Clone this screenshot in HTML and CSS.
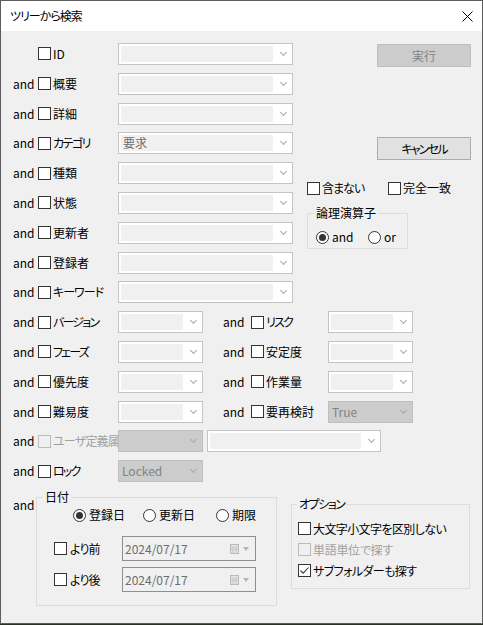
FILE: index.html
```html
<!DOCTYPE html>
<html lang="ja">
<head>
<meta charset="utf-8">
<title>ツリーから検索</title>
<link rel="stylesheet" href="styles.css">
</head>
<body>
<div class="window">
  <div class="titlebar">
    <span class="title ls15">ツリーから検索</span>
    <svg class="close" width="11" height="11" viewBox="0 0 11 11"><path d="M0.5 0.5 L10.5 10.5 M10.5 0.5 L0.5 10.5" stroke="#000" stroke-width="1" fill="none"/></svg>
  </div>
  <div class="content">
    <div class="top">
      <div class="rows">
        <div class="row"><span class="and"></span><span class="cb"></span><span class="lbl">ID</span><div class="combo"><span class="field"></span><span class="arrow"></span></div></div>
        <div class="row"><span class="and">and</span><span class="cb"></span><span class="lbl">概要</span><div class="combo"><span class="field"></span><span class="arrow"></span></div></div>
        <div class="row"><span class="and">and</span><span class="cb"></span><span class="lbl">詳細</span><div class="combo"><span class="field"></span><span class="arrow"></span></div></div>
        <div class="row"><span class="and">and</span><span class="cb"></span><span class="lbl ls25">カテゴリ</span><div class="combo"><span class="field">要求</span><span class="arrow"></span></div></div>
        <div class="row"><span class="and">and</span><span class="cb"></span><span class="lbl">種類</span><div class="combo"><span class="field"></span><span class="arrow"></span></div></div>
        <div class="row"><span class="and">and</span><span class="cb"></span><span class="lbl">状態</span><div class="combo"><span class="field"></span><span class="arrow"></span></div></div>
        <div class="row"><span class="and">and</span><span class="cb"></span><span class="lbl">更新者</span><div class="combo"><span class="field"></span><span class="arrow"></span></div></div>
        <div class="row"><span class="and">and</span><span class="cb"></span><span class="lbl">登録者</span><div class="combo"><span class="field"></span><span class="arrow"></span></div></div>
        <div class="row"><span class="and">and</span><span class="cb"></span><span class="lbl ls15">キーワード</span><div class="combo"><span class="field"></span><span class="arrow"></span></div></div>
      </div>
      <div class="side">
        <div class="btn btn-off">実行</div>
        <div class="btn btn-cancel"><span class="ls35">キャンセル</span></div>
        <div class="flags">
          <span class="flag flag-first"><span class="cb"></span><span class="flbl ls15">含まない</span></span>
          <span class="flag"><span class="cb"></span><span class="flbl">完全一致</span></span>
        </div>
        <fieldset class="group logic">
          <legend>論理演算子</legend>
          <div class="radios">
            <span class="ritem ritem-and"><span class="radio on"></span><span class="rlbl">and</span></span>
            <span class="ritem"><span class="radio"></span><span class="rlbl">or</span></span>
          </div>
        </fieldset>
      </div>
    </div>

    <div class="mid">
      <div class="mrow">
        <span class="and">and</span><span class="cb"></span><span class="lbl ls3">バージョン</span><div class="combo"><span class="field"></span><span class="arrow"></span></div>
        <span></span><span class="and">and</span><span class="cb"></span><span class="lbl ls3">リスク</span><div class="combo"><span class="field"></span><span class="arrow"></span></div>
      </div>
      <div class="mrow">
        <span class="and">and</span><span class="cb"></span><span class="lbl ls3">フェーズ</span><div class="combo"><span class="field"></span><span class="arrow"></span></div>
        <span></span><span class="and">and</span><span class="cb"></span><span class="lbl">安定度</span><div class="combo"><span class="field"></span><span class="arrow"></span></div>
      </div>
      <div class="mrow">
        <span class="and">and</span><span class="cb"></span><span class="lbl">優先度</span><div class="combo"><span class="field"></span><span class="arrow"></span></div>
        <span></span><span class="and">and</span><span class="cb"></span><span class="lbl">作業量</span><div class="combo"><span class="field"></span><span class="arrow"></span></div>
      </div>
      <div class="mrow">
        <span class="and">and</span><span class="cb"></span><span class="lbl">難易度</span><div class="combo"><span class="field"></span><span class="arrow"></span></div>
        <span></span><span class="and">and</span><span class="cb"></span><span class="lbl">要再検討</span><div class="combo combo-off"><span class="field">True</span><span class="arrow"></span></div>
      </div>
      <div class="mrow">
        <span class="and and-off">and</span><span class="cb cb-off"></span><span class="lbl lbl-off ls1">ユーザ定義属性</span><div class="combo combo-off"><span class="field"></span><span class="arrow"></span></div>
        <div class="combo combo-wide"><span class="field"></span><span class="arrow"></span></div>
      </div>
      <div class="mrow">
        <span class="and">and</span><span class="cb"></span><span class="lbl ls3">ロック</span><div class="combo combo-off"><span class="field">Locked</span><span class="arrow"></span></div>
      </div>
    </div>

    <div class="bottom">
      <span class="and and-date">and</span>
      <fieldset class="group date">
        <legend>日付</legend>
        <div class="dradios">
          <span class="ritem d1"><span class="radio on"></span><span class="rlbl">登録日</span></span>
          <span class="ritem d2"><span class="radio"></span><span class="rlbl">更新日</span></span>
          <span class="ritem"><span class="radio"></span><span class="rlbl">期限</span></span>
        </div>
        <div class="drow drow-first">
          <span class="cb"></span><span class="dlbl"><span class="ls1">より前</span></span>
          <div class="picker"><span class="ptext">2024/07/17</span>
            <svg class="cal" width="9" height="10" viewBox="0 0 9 10"><rect x="0.5" y="0.5" width="8" height="9" fill="#e4e4e4" stroke="#b9b9b9"/><path d="M0.5 3 H8.5 M0.5 5.5 H8.5 M3 3 V9.5 M6 3 V9.5" stroke="#c6c6c6" fill="none"/></svg>
            <span class="tri"></span>
          </div>
        </div>
        <div class="drow">
          <span class="cb"></span><span class="dlbl"><span class="ls1">より後</span></span>
          <div class="picker"><span class="ptext">2024/07/17</span>
            <svg class="cal" width="9" height="10" viewBox="0 0 9 10"><rect x="0.5" y="0.5" width="8" height="9" fill="#e4e4e4" stroke="#b9b9b9"/><path d="M0.5 3 H8.5 M0.5 5.5 H8.5 M3 3 V9.5 M6 3 V9.5" stroke="#c6c6c6" fill="none"/></svg>
            <span class="tri"></span>
          </div>
        </div>
      </fieldset>
      <fieldset class="group options">
        <legend class="ls25">オプション</legend>
        <div class="orow"><span class="cb"></span><span class="olbl ls07">大文字小文字を区別しない</span></div>
        <div class="orow"><span class="cb cb-off"></span><span class="olbl olbl-off ls03">単語単位で探す</span></div>
        <div class="orow"><span class="cb cb-on"><svg width="11" height="11" viewBox="0 0 11 11"><path d="M1.5 5.5 L4.2 8.2 L9.5 2.5" stroke="#3a3a3a" stroke-width="1.1" fill="none"/></svg></span><span class="olbl ls07">サブフォルダーも探す</span></div>
      </fieldset>
    </div>
  </div>
</div>
</body>
</html>
```

FILE: styles.css
```css
body {
  margin: 0;
  background: #2a3222;
  font-family: "Noto Sans CJK JP", "Noto Sans", sans-serif;
  font-size: 12px;
  line-height: 16px;
  color: #000;
  font-feature-settings: "palt" 1;
}

.ls03 { letter-spacing: -0.3px; }
.ls07 { letter-spacing: -0.6px; }
.ls1 { letter-spacing: -0.8px; }
.ls15 { letter-spacing: -1px; }
.ls25 { letter-spacing: -1.5px; }
.ls3 { letter-spacing: -1.8px; }
.ls35 { letter-spacing: -1.8px; }

.window {
  width: 483px;
  height: 624px;
  box-sizing: border-box;
  border: 1px solid #5c5c5c;
  background: #f0f0f0;
  display: flex;
  flex-direction: column;
}

.titlebar {
  height: 30px;
  flex: none;
  background: #fff;
  display: flex;
  align-items: center;
  justify-content: space-between;
  padding: 0 9px;
}

.title {
  font-size: 12px;
  color: #000;
}

.content {
  padding-top: 8.1px;
}

/* ---------- top section ---------- */
.top {
  display: flex;
}

.rows {
  width: 292px;
}

.row {
  display: grid;
  grid-template-columns: 25px 13px 67px 175px;
  align-items: center;
  height: 29.8px;
  padding-left: 12px;
}

.mrow {
  display: grid;
  grid-template-columns: 25px 13px 67px 85px 20px 28px 13px 64px 85px;
  align-items: center;
  height: 29.8px;
  padding-left: 12px;
}

.and {
  color: #000;
}

.lbl {
  padding-left: 2px;
  white-space: nowrap;
  overflow: hidden;
}

.lbl-off {
  color: #a0a0a0;
}

/* checkbox */
.cb {
  width: 13px;
  height: 13px;
  box-sizing: border-box;
  border: 1px solid #333;
  background: #fff;
  display: flex;
  align-items: center;
  justify-content: center;
  flex: none;
}

.cb-off {
  border-color: #bcbcbc;
  background: #f0f0f0;
}

.cb-on svg {
  display: block;
}

/* radio */
.radio {
  width: 13px;
  height: 13px;
  box-sizing: border-box;
  border: 1px solid #333;
  border-radius: 50%;
  background: #fff;
  display: flex;
  align-items: center;
  justify-content: center;
  flex: none;
}

.radio.on::after {
  content: "";
  width: 7px;
  height: 7px;
  border-radius: 50%;
  background: #333;
}

/* combo */
.combo {
  display: flex;
  box-sizing: border-box;
  height: 22px;
  width: 175px;
  border: 1px solid #c4c4c4;
  background: #fff;
  padding: 2px 0 2px 2px;
}

.mrow .combo {
  width: 85px;
}

.field {
  flex: 1;
  background: #f0f0f0;
  color: #6d6d6d;
  padding-left: 2px;
  line-height: 16px;
  white-space: nowrap;
  overflow: hidden;
}

.arrow {
  width: 19px;
  flex: none;
  display: flex;
  align-items: center;
  justify-content: center;
  padding-left: 2px;
  box-sizing: border-box;
}

.arrow::before {
  content: "";
  width: 4px;
  height: 4px;
  border-right: 1px solid #a9a9a9;
  border-bottom: 1px solid #a9a9a9;
  transform: rotate(45deg);
  margin-top: -3px;
}

.combo-off {
  background: #cccccc;
  border-color: #bfbfbf;
  padding: 0;
}

.combo-off .field {
  background: transparent;
  color: #838383;
  padding-left: 3px;
  line-height: 20px;
}

.mrow .combo-wide {
  grid-column: 5 / span 5;
  width: 174px;
  margin-left: 4px;
}

/* side column */
.side {
  padding-left: 14px;
  display: flex;
  flex-direction: column;
  align-items: flex-start;
}

.btn {
  width: 94px;
  height: 23px;
  box-sizing: border-box;
  margin-left: 70px;
  display: flex;
  align-items: center;
  justify-content: center;
  border: 1px solid #adadad;
  background: #e1e1e1;
}

.btn-off {
  margin-top: 5px;
  background: #cccccc;
  border-color: #bfbfbf;
  color: #838383;
}

.btn-cancel {
  margin-top: 70px;
}

.flags {
  margin-top: 20px;
  display: flex;
  align-items: center;
  height: 16px;
}

.flag {
  display: flex;
  align-items: center;
}

.flag-first {
  width: 81px;
}

.flbl {
  padding-left: 2px;
  white-space: nowrap;
}

.group {
  margin: 0;
  border: 1px solid #dcdcdc;
  min-width: 0;
  box-sizing: border-box;
}

.group legend {
  padding: 0 2px;
  line-height: 16px;
}

.logic {
  margin-top: 9px;
  width: 101px;
  padding: 8px 0 3px 8px;
}

.logic legend {
  margin-left: -2px;
}

.radios {
  display: flex;
  align-items: center;
  height: 16px;
}

.ritem {
  display: flex;
  align-items: center;
}

.ritem-and {
  width: 52px;
}

.rlbl {
  padding-left: 3px;
  white-space: nowrap;
}

/* bottom */
.bottom {
  display: flex;
  align-items: flex-start;
  padding-left: 12px;
}

.and-date {
  width: 23px;
  margin-top: 11px;
  flex: none;
}

.date {
  width: 241px;
  margin-top: 3px;
  padding: 2px 0 13px 0;
}

.date legend {
  margin-left: 6px;
}

.dradios {
  display: flex;
  align-items: center;
  height: 16px;
  padding-left: 36px;
}

.d1 {
  width: 70px;
}

.d2 {
  width: 73px;
}

.drow {
  display: flex;
  align-items: center;
  height: 25px;
  padding-left: 17px;
  margin-top: 6px;
}

.drow-first {
  margin-top: 13px;
}

.dlbl {
  width: 55px;
  box-sizing: border-box;
  padding-left: 3px;
  white-space: nowrap;
}

.picker {
  display: flex;
  align-items: center;
  width: 134px;
  height: 25px;
  box-sizing: border-box;
  border: 1px solid #8f8f8f;
  background: #f0f0f0;
  padding-left: 2px;
}

.ptext {
  flex: 1;
  color: #6d6d6d;
}

.cal {
  display: block;
  margin-right: 4px;
}

.tri {
  width: 0;
  height: 0;
  border-left: 3.5px solid transparent;
  border-right: 3.5px solid transparent;
  border-top: 4px solid #b4b4b4;
  margin-right: 6px;
}

.options {
  width: 179px;
  margin-top: 10px;
  margin-left: 14px;
  padding: 6px 0 7px 6px;
}

.options legend {
  margin-left: -1px;
}

.orow {
  display: flex;
  align-items: center;
  height: 21px;
}

.olbl {
  padding-left: 2px;
  white-space: nowrap;
}

.olbl-off {
  color: #a0a0a0;
}
```
